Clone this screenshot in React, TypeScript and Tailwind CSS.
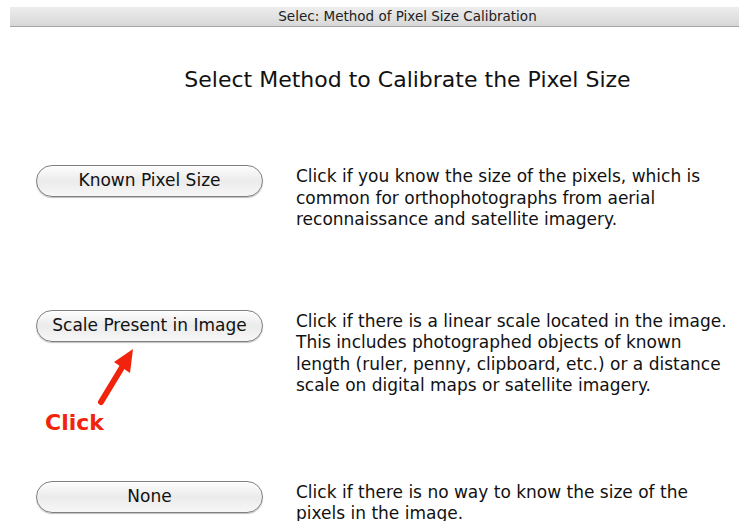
import React from "react";

const font = { fontFamily: '"DejaVu Sans", "Lucida Grande", Verdana, sans-serif' };

function AquaButton({ label }: { label: string }) {
  return (
    <button
      className="w-[227px] h-[32px] rounded-full border border-[#7f7f7f] bg-gradient-to-b from-[#fdfdfd] via-[#ebebeb] to-[#f7f7f7] text-[17px] text-[#111] shadow-[inset_0_1px_0_#ffffff,0_1px_1px_rgba(0,0,0,0.25)] flex items-center justify-center shrink-0"
      style={font}
    >
      {label}
    </button>
  );
}

function Row({ label, lines, className }: { label: string; lines: string[]; className?: string }) {
  return (
    <div className={"flex items-start pl-[36px] " + (className ?? "")}>
      <AquaButton label={label} />
      <div className="ml-[33px] mt-[1px] text-[17px] leading-[21.5px] text-[#111]" style={font}>
        {lines.map((l) => (
          <div key={l} className="whitespace-nowrap">{l}</div>
        ))}
      </div>
    </div>
  );
}

export default function App() {
  return (
    <div className="relative w-[739px] h-[521px] bg-white overflow-hidden" style={font}>
      <div className="ml-[10px] mt-[7px] h-[20px] pl-[66px] bg-gradient-to-b from-[#ededed] to-[#d8d8d8] border-b border-[#a5a5a5] flex items-center justify-center text-[13.5px] text-[#222]">
        Selec: Method of Pixel Size Calibration
      </div>

      <h1 className="mt-[40px] text-center text-[22px] text-[#111] pl-[76px] leading-[26px]">
        Select Method to Calibrate the Pixel Size
      </h1>

      <Row
        className="mt-[72px]"
        label="Known Pixel Size"
        lines={[
          "Click if you know the size of the pixels, which is",
          "common for orthophotographs from aerial",
          "reconnaissance and satellite imagery.",
        ]}
      />

      <Row
        className="mt-[79px]"
        label="Scale Present in Image"
        lines={[
          "Click if there is a linear scale located in the image.",
          "This includes photographed objects of known",
          "length (ruler, penny, clipboard, etc.) or a distance",
          "scale on digital maps or satellite imagery.",
        ]}
      />

      <Row
        className="mt-[84px]"
        label="None"
        lines={["Click if there is no way to know the size of the", "pixels in the image."]}
      />

      {/* red annotation pointing at the scale button */}
      <svg className="absolute left-[90px] top-[342px]" width="50" height="66" viewBox="0 0 50 66">
        <path d="M11 60 L34 22" stroke="#f2230c" strokeWidth="6" strokeLinecap="round" fill="none" />
        <path d="M43 7 L24 20 L40 31 Z" fill="#f2230c" />
      </svg>
      <div className="absolute left-[45px] top-[410px] text-[22px] font-bold text-[#f2230c] leading-[26px]">
        Click
      </div>
    </div>
  );
}
